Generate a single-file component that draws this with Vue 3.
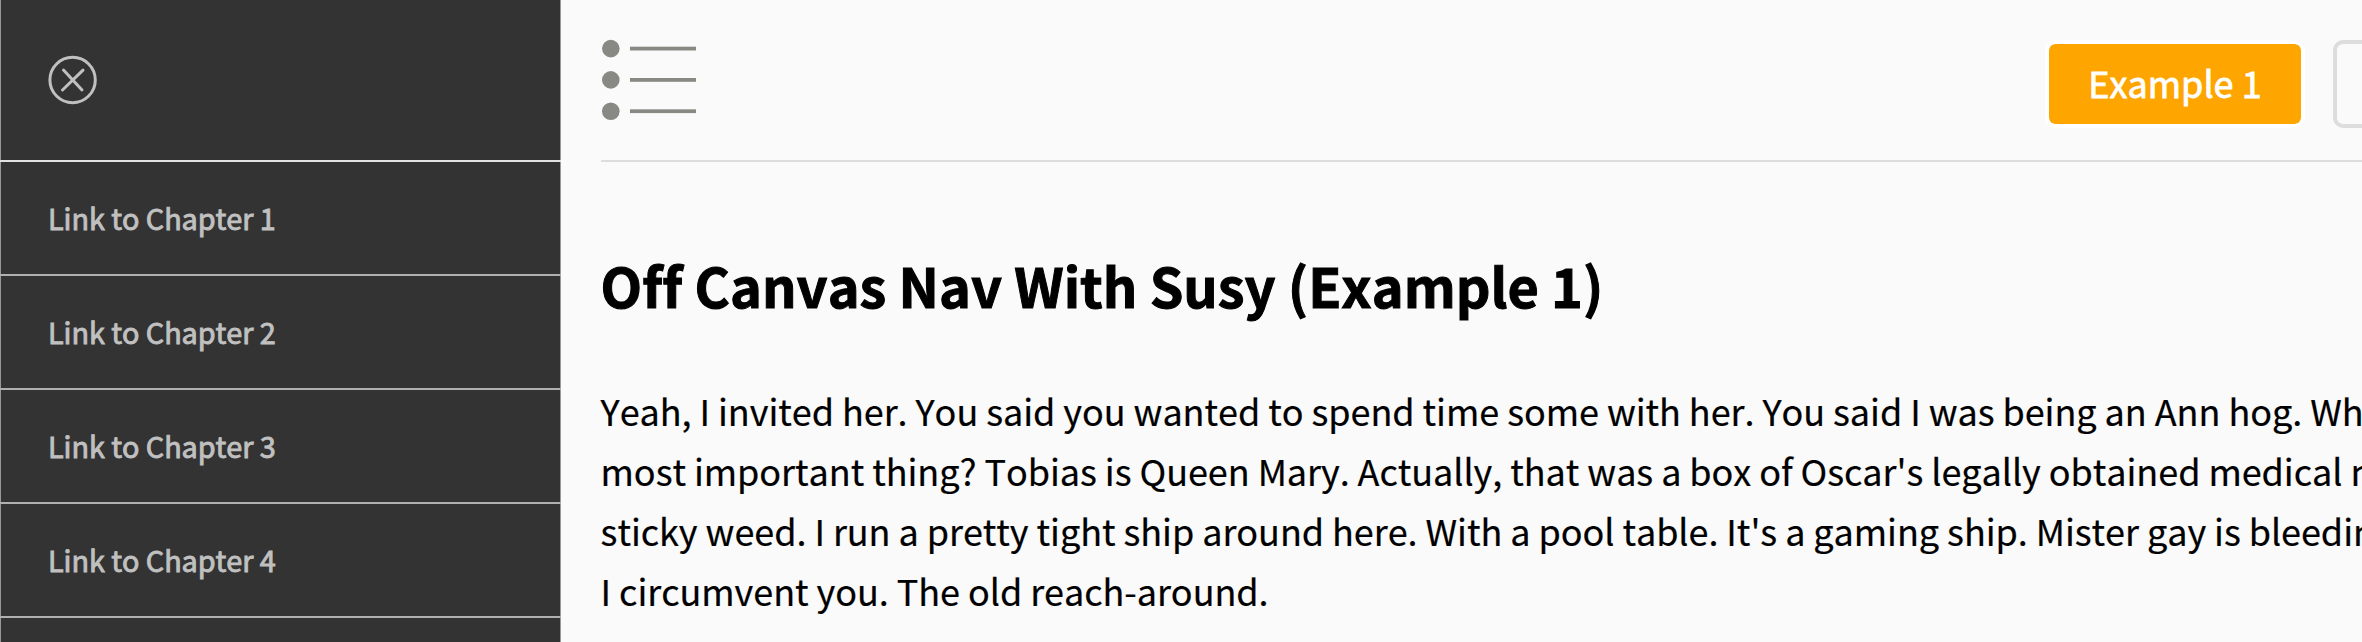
<script setup>
const chapters = [1, 2, 3, 4]
const lines = [
  'Yeah, I invited her. You said you wanted to spend time some with her. You said I was being an Ann hog. Wh',
  "most important thing? Tobias is Queen Mary. Actually, that was a box of Oscar's legally obtained medical m",
  "sticky weed. I run a pretty tight ship around here. With a pool table. It's a gaming ship. Mister gay is bleedin",
  'I circumvent you. The old reach-around.',
]
</script>

<template>
  <div class="page">
    <nav class="sidebar">
      <div class="close-row">
        <svg class="close" width="50" height="50" viewBox="0 0 50 50">
          <circle cx="24.6" cy="25" r="22.7" />
          <path d="M15.5 15.1L34 35M35 15.1L14.5 35" />
        </svg>
      </div>
      <a v-for="n in chapters" :key="n" class="link"><span>Link to Chapter {{ n }}</span></a>
    </nav>
    <main class="content">
      <header class="top">
        <svg class="menu" width="100" height="84" viewBox="0 0 100 84">
          <g v-for="y in [10.6, 41.9, 73.2]" :key="y">
            <circle cx="9.8" :cy="y" r="8.8" />
            <rect x="29" :y="y - 1.9" width="66" height="3.8" />
          </g>
        </svg>
        <div class="buttons">
          <a class="btn active"><span>Example 1</span></a>
          <a class="btn"></a>
        </div>
      </header>
      <h1><span>Off Canvas Nav With Susy (Example 1)</span></h1>
      <p><span v-for="l in lines" :key="l" class="line">{{ l }}</span></p>
    </main>
  </div>
</template>

<style>
body {
  margin: 0;
  overflow: hidden;
}
</style>

<style scoped>
.page {
  display: flex;
  width: 2362px;
  height: 642px;
  overflow: hidden;
  background: #fafafa;
  color: #000;
  font-family: "Noto Sans CJK SC", "Noto Sans", sans-serif;
  font-kerning: none;
  font-variant-ligatures: none;
}
.sidebar {
  box-sizing: border-box;
  flex: none;
  width: 561px;
  height: 642px;
  overflow: hidden;
  background: linear-gradient(#999, #999) left / 1px 100% no-repeat,
    linear-gradient(#999, #999) right / 1px 100% no-repeat, #333;
}
.close-row {
  height: 160px;
  border-bottom: 2px solid #e2e2e2;
  display: flex;
  align-items: center;
  padding-left: 48px;
}
.close {
  fill: none;
  stroke: #c0c0c0;
  stroke-width: 3;
  stroke-linecap: round;
}
.link {
  display: block;
  height: 112px;
  border-bottom: 2px solid #b0b0b0;
  padding-left: 48px;
  color: #c0c0c0;
  font-size: 28.8px;
  letter-spacing: -0.05px;
  line-height: 112px;
  -webkit-text-stroke: 0.9px #c0c0c0;
  white-space: nowrap;
}
.content {
  flex: none;
  width: 1761.4px;
  margin-left: 39.6px;
}
.top {
  display: flex;
  justify-content: space-between;
  height: 160px;
  border-bottom: 2px solid #ddd;
}
.menu {
  margin-top: 38px;
  fill: #898983;
}
.buttons {
  display: flex;
  flex: none;
  gap: 28px;
  width: 317px;
  padding-top: 40px;
}
.btn {
  box-sizing: border-box;
  flex: none;
  width: 260px;
  height: 88px;
  border: 4px solid #ddd;
  border-radius: 10px;
  font-size: 36px;
  line-height: 77px;
  text-align: center;
  white-space: nowrap;
}
.active {
  border-color: #fff;
  background: #ffa500;
  background-clip: padding-box;
  color: #fff;
  -webkit-text-stroke: 0.8px #fff;
}
h1 {
  height: 90px;
  margin: 78px 0 0;
  font-size: 54px;
  font-weight: 700;
  line-height: 90px;
  -webkit-text-stroke: 1px #000;
  white-space: nowrap;
}
p {
  margin: 50px 0 0;
  font-size: 36px;
  letter-spacing: -0.055px;
  line-height: 60px;
  -webkit-text-stroke: 0.2px #000;
}
.line {
  display: block;
  white-space: nowrap;
}
</style>
